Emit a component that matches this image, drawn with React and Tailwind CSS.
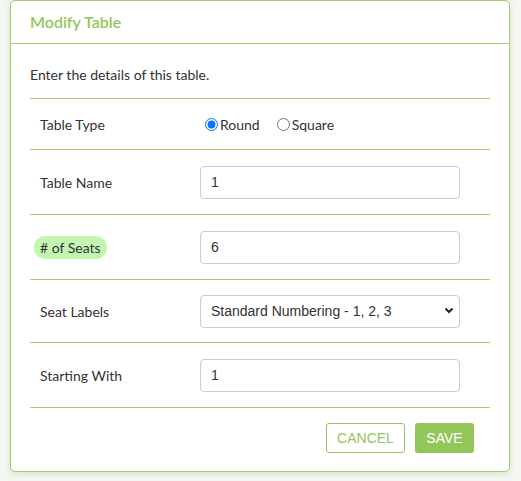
import React, { useState } from 'react';

const label = "text-[14px] text-[#333] [font-family:Lato,'Noto_Sans',sans-serif]";
const field = "w-[260px] h-[33px] border border-[#ccc] rounded-[4px] bg-white px-[10px] text-[14px] text-[#333] [font-family:'Liberation_Sans',Arial,sans-serif] outline-none";

function Row({ children, h = 'h-[65px]' }) {
  return (
    <div className={`flex items-center ${h} border-b border-[#a3cf6b] px-[10px]`}>
      {children}
    </div>
  );
}

export default function App() {
  const [type, setType] = useState('round');
  const [name, setName] = useState('1');
  const [seats, setSeats] = useState('6');
  const [labels, setLabels] = useState('std');
  const [start, setStart] = useState('1');

  return (
    <div className="w-[521px] h-[481px] overflow-hidden bg-[#f5f7f3]">
      <div className="ml-[10px] w-[500px] h-[472px] bg-white border border-[#a3cf6b] rounded-[5px] shadow-[0_2px_6px_rgba(120,170,60,0.25)] flex flex-col">
        <div className="h-[43px] border-b border-[#a3cf6b] flex items-center px-[19px]">
          <h1 className="text-[16px] font-semibold text-[#93c65a] [font-family:Lato,'Noto_Sans',sans-serif]">Modify Table</h1>
        </div>

        <div className="px-[19px]">
          <div className="h-[55px] flex items-center border-b border-[#a3cf6b] pt-[6px]">
            <p className={label}>Enter the details of this table.</p>
          </div>

          <Row h="h-[51px]">
            <span className={`${label} w-[165px]`}>Table Type</span>
            <label className={`${label} flex items-center gap-[2px]`}>
              <input type="radio" name="type" checked={type === 'round'} onChange={() => setType('round')} className="w-[13px] h-[13px] m-0 accent-[#0a75ff]" />
              Round
            </label>
            <label className={`${label} flex items-center gap-[2px] ml-[17px]`}>
              <input type="radio" name="type" checked={type === 'square'} onChange={() => setType('square')} className="w-[13px] h-[13px] m-0" />
              Square
            </label>
          </Row>

          <Row>
            <span className={`${label} w-[160px]`}>Table Name</span>
            <input className={field} value={name} onChange={e => setName(e.target.value)} />
          </Row>

          <Row>
            <div className="w-[160px]">
              <span className={`${label} inline-block bg-[#c4f6b2] rounded-full px-[6px] py-[1px] -ml-[6px]`}># of Seats</span>
            </div>
            <input className={field} value={seats} onChange={e => setSeats(e.target.value)} />
          </Row>

          <Row h="h-[63px]">
            <span className={`${label} w-[160px]`}>Seat Labels</span>
            <div className="relative">
              <select value={labels} onChange={e => setLabels(e.target.value)} className={`${field} appearance-none h-[32px]`}>
                <option value="std">Standard Numbering - 1, 2, 3</option>
                <option value="alpha">Letters - A, B, C</option>
              </select>
              <svg className="absolute right-[6px] top-[12px] pointer-events-none" width="10" height="7" viewBox="0 0 10 7">
                <path d="M1.5 1.5 L5 5 L8.5 1.5" fill="none" stroke="#222" strokeWidth="2" />
              </svg>
            </div>
          </Row>

          <Row>
            <span className={`${label} w-[160px]`}>Starting With</span>
            <input className={field} value={start} onChange={e => setStart(e.target.value)} />
          </Row>

          <div className="flex justify-end gap-[10px] pt-[15px] pr-[16px]">
            <button className="h-[30px] w-[79px] border border-[#93c65a] rounded-[3px] text-[#93c65a] text-[14px] bg-white [font-family:'Liberation_Sans',Arial,sans-serif]">CANCEL</button>
            <button className="h-[30px] w-[59px] rounded-[3px] bg-[#93c65a] text-white text-[14px] [font-family:'Liberation_Sans',Arial,sans-serif]">SAVE</button>
          </div>
        </div>
      </div>
    </div>
  );
}
